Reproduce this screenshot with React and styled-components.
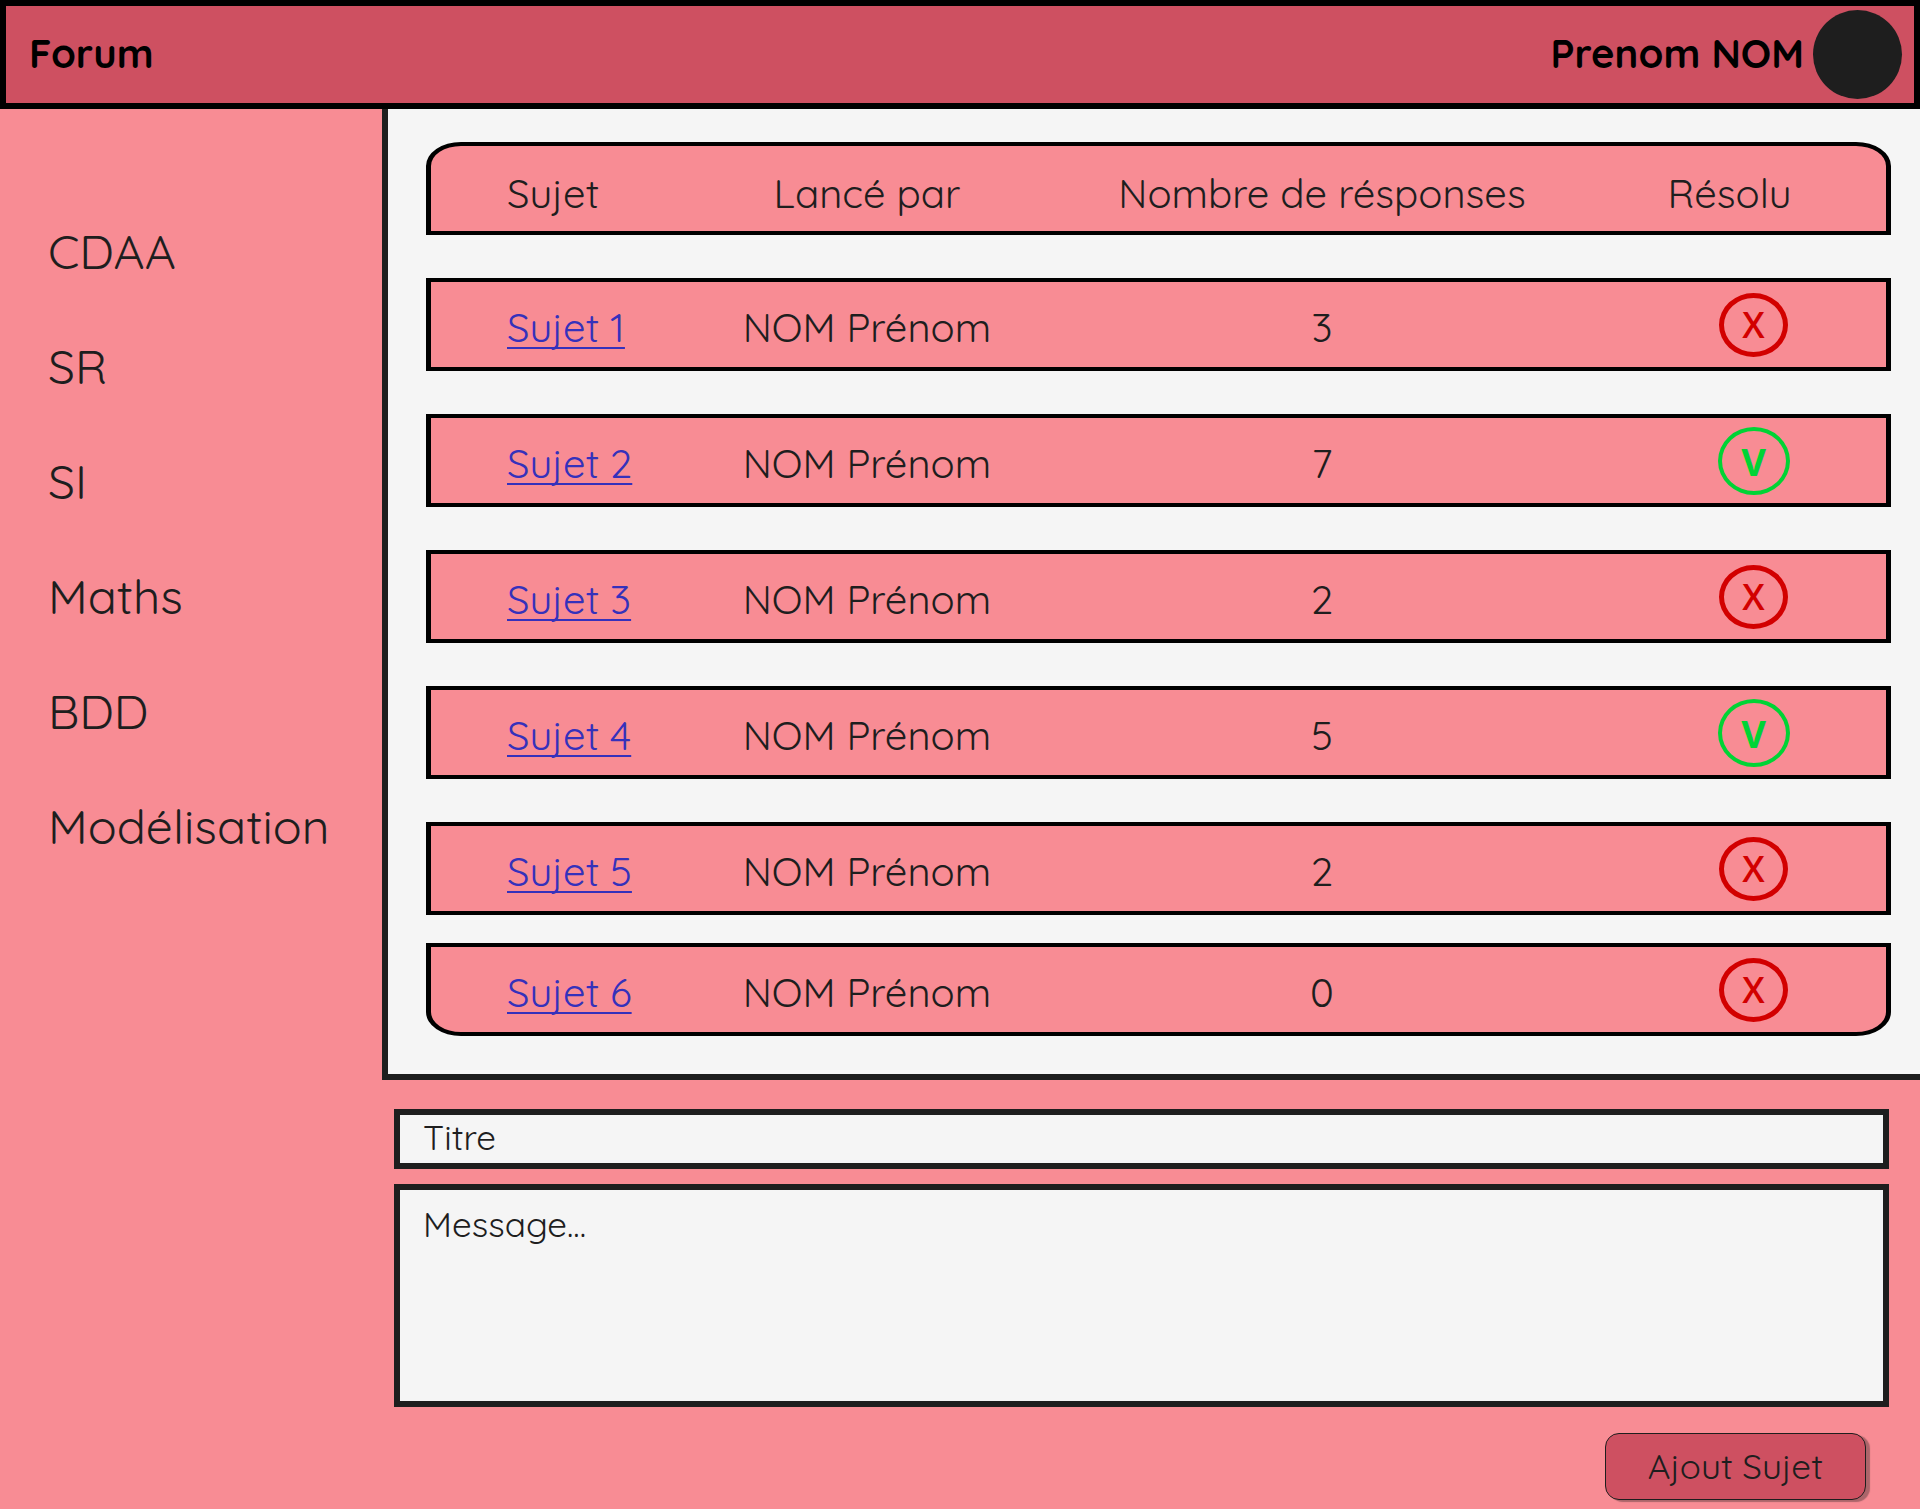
import React from 'react';
import styled, { createGlobalStyle, css } from 'styled-components';

const GlobalStyle = createGlobalStyle`
  *, *::before, *::after { box-sizing: border-box; }
  body {
    margin: 0;
    background: #f88c94;
    color: #1e1e1e;
    font-family: Quicksand, "Open Sans", sans-serif;
    font-weight: 400;
  }
`;

const Page = styled.div`
  min-height: 100vh;
  display: flex;
  flex-direction: column;
`;

const TopBar = styled.header`
  display: flex;
  align-items: center;
  justify-content: space-between;
  height: 109px;
  padding: 0 12px 0 23px;
  border: 6px solid #000;
  background: #ce5061;
  color: #000;
  font-size: 40px;
  line-height: 50px;
  font-weight: 700;
`;

const Brand = styled.h1`
  margin: 0;
  padding-bottom: 4px;
  font: inherit;
`;

const User = styled.div`
  display: flex;
  align-items: center;
  gap: 9px;
`;

const UserName = styled.span`
  padding-bottom: 4px;
`;

const Avatar = styled.span`
  width: 89px;
  height: 89px;
  border-radius: 50%;
  background: #1e1e1e;
`;

const Body = styled.div`
  flex: 1;
  display: grid;
  grid-template-columns: 382px minmax(0, 1fr);
`;

const Sidebar = styled.nav`
  padding: 112px 20px 40px 48px;
`;

const SubjectList = styled.ul`
  display: flex;
  flex-direction: column;
  gap: 55px;
  margin: 0;
  padding: 0;
  list-style: none;
`;

const SubjectLink = styled.a`
  display: block;
  color: inherit;
  font-size: 48px;
  line-height: 60px;
  text-decoration: none;
`;

const Panel = styled.section`
  padding: 33px 29px 38px 38px;
  border: solid #1e1e1e;
  border-width: 0 0 6px 6px;
  background: #f5f5f5;
`;

const Topics = styled.table`
  display: flex;
  flex-direction: column;
  font-size: 40px;
  line-height: 50px;
`;

const TopicsHead = styled.thead`
  display: block;
`;

const TopicsBody = styled.tbody`
  display: block;
`;

const Row = styled.tr`
  display: grid;
  grid-template-columns: 260fr 352fr 558fr 285fr;
  align-items: center;
  height: 93px;
  margin-top: ${p => ({ none: 0, normal: '43px', tight: '28px' })[p.$gap || 'normal']};
  border: solid #000;
  border-width: 4px 5px;
  background: #f88c94;
  ${p => p.$round === 'top' && css`border-radius: 35px 35px 0 0 / 24px 24px 0 0;`}
  ${p => p.$round === 'bottom' && css`border-radius: 0 0 35px 35px / 0 0 24px 24px;`}
`;

const HeadCell = styled.th`
  padding: 9px 0 0 ${p => (p.$first ? '76px' : 0)};
  padding-right: ${p => (p.$last ? '28px' : 0)};
  font-weight: 400;
  text-align: ${p => (p.$first ? 'left' : 'center')};
  white-space: nowrap;
`;

const Cell = styled.td`
  padding: 5px 0 0 ${p => (p.$first ? '76px' : 0)};
  text-align: ${p => (p.$first ? 'left' : 'center')};
  white-space: nowrap;
`;

const StatusCell = styled.td`
  display: flex;
  justify-content: center;
  padding: 0 0 0 20px;
`;

const TopicLink = styled.a`
  color: #3531bb;
  text-decoration: underline 2px;
  text-decoration-skip-ink: none;
  text-underline-offset: 5px;
`;

const Status = styled.span`
  display: flex;
  align-items: center;
  justify-content: center;
  width: ${p => (p.$solved ? '72px' : '69px')};
  height: ${p => (p.$solved ? '68px' : '64px')};
  border: ${p => (p.$solved ? '4px solid #00d435' : '5px solid #d20000')};
  border-radius: 50%;
  color: ${p => (p.$solved ? '#00d435' : '#d20000')};
  font-family: "Open Sans", sans-serif;
  font-size: ${p => (p.$solved ? '38px' : '36px')};
  line-height: 40px;
  font-weight: ${p => (p.$solved ? 700 : 600)};
`;

const NewTopic = styled.form`
  display: flex;
  flex-direction: column;
  padding: 29px 31px 9px 12px;
`;

const field = css`
  display: block;
  width: 100%;
  margin: 0;
  border: 6px solid #1e1e1e;
  border-radius: 0;
  background: #f5f5f5;
  color: inherit;
  font: inherit;
  font-size: 35px;
  line-height: 44px;
  outline: none;
  &::placeholder { color: #1e1e1e; opacity: 1; }
`;

const TitleInput = styled.input`
  ${field}
  height: 60px;
  padding: 0 23px 4px;
`;

const MessageInput = styled.textarea`
  ${field}
  height: 223px;
  margin-top: 15px;
  padding: 12px 23px;
  resize: none;
`;

const SubmitButton = styled.button`
  align-self: flex-end;
  height: 67px;
  margin: 26px 23px 0 0;
  padding: 0 42px 2px;
  border: 1px solid #1e1e1e;
  border-radius: 14px;
  background: #ce5061;
  box-shadow: 4px 2px 1px rgba(30, 30, 30, 0.35);
  color: #1e1e1e;
  font: inherit;
  font-size: 35px;
  line-height: 44px;
`;

const subjects = ['CDAA', 'SR', 'SI', 'Maths', 'BDD', 'Modélisation'];

const topics = [
  { title: 'Sujet 1', author: 'NOM Prénom', replies: 3, solved: false },
  { title: 'Sujet 2', author: 'NOM Prénom', replies: 7, solved: true },
  { title: 'Sujet 3', author: 'NOM Prénom', replies: 2, solved: false },
  { title: 'Sujet 4', author: 'NOM Prénom', replies: 5, solved: true },
  { title: 'Sujet 5', author: 'NOM Prénom', replies: 2, solved: false },
  { title: 'Sujet 6', author: 'NOM Prénom', replies: 0, solved: false },
];

export default function App() {
  return (
    <Page>
      <GlobalStyle />
      <TopBar>
        <Brand>Forum</Brand>
        <User>
          <UserName>Prenom NOM</UserName>
          <Avatar />
        </User>
      </TopBar>
      <Body>
        <Sidebar>
          <SubjectList>
            {subjects.map(name => (
              <li key={name}>
                <SubjectLink href={`#${name}`}>{name}</SubjectLink>
              </li>
            ))}
          </SubjectList>
        </Sidebar>
        <main>
          <Panel>
            <Topics>
              <TopicsHead>
                <Row $gap="none" $round="top">
                  <HeadCell scope="col" $first>Sujet</HeadCell>
                  <HeadCell scope="col">Lancé par</HeadCell>
                  <HeadCell scope="col">Nombre de résponses</HeadCell>
                  <HeadCell scope="col" $last>Résolu</HeadCell>
                </Row>
              </TopicsHead>
              <TopicsBody>
                {topics.map((topic, i) => {
                  const last = i === topics.length - 1;
                  return (
                    <Row
                      key={topic.title}
                      $gap={last ? 'tight' : 'normal'}
                      $round={last ? 'bottom' : undefined}
                    >
                      <Cell $first>
                        <TopicLink href={`#sujet-${i + 1}`}>{topic.title}</TopicLink>
                      </Cell>
                      <Cell>{topic.author}</Cell>
                      <Cell>{topic.replies}</Cell>
                      <StatusCell>
                        <Status $solved={topic.solved}>{topic.solved ? 'V' : 'X'}</Status>
                      </StatusCell>
                    </Row>
                  );
                })}
              </TopicsBody>
            </Topics>
          </Panel>
          <NewTopic onSubmit={e => e.preventDefault()}>
            <TitleInput type="text" placeholder="Titre" aria-label="Titre" />
            <MessageInput placeholder="Message..." aria-label="Message" />
            <SubmitButton type="submit">Ajout Sujet</SubmitButton>
          </NewTopic>
        </main>
      </Body>
    </Page>
  );
}
